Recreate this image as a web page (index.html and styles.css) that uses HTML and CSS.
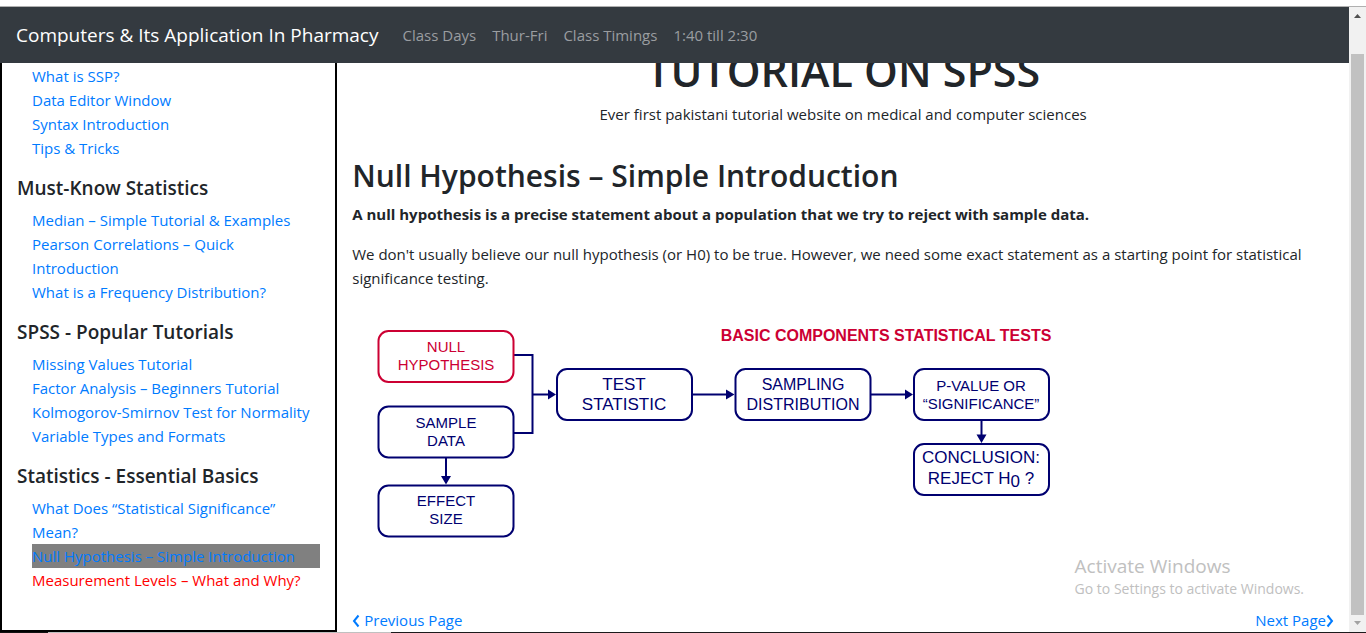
FILE: index.html
```
<!DOCTYPE html>
<html lang="en">
<head>
<meta charset="utf-8">
<title>Tutorial on SPSS</title>
<link rel="stylesheet" href="styles.css">
</head>
<body>
<div class="window">
  <div class="page">
    <nav class="navbar">
      <a class="brand" href="#">Computers &amp; Its Application In Pharmacy</a>
      <a class="nav-link" href="#">Class Days</a>
      <a class="nav-link" href="#">Thur-Fri</a>
      <a class="nav-link" href="#">Class Timings</a>
      <a class="nav-link" href="#">1:40 till 2:30</a>
    </nav>
    <div class="columns">
      <aside class="sidebar">
        <ul class="topics">
          <li><a href="#">What is SSP?</a></li>
          <li><a href="#">Data Editor Window</a></li>
          <li><a href="#">Syntax Introduction</a></li>
          <li><a href="#">Tips &amp; Tricks</a></li>
        </ul>
        <h5>Must-Know Statistics</h5>
        <ul class="topics">
          <li><a href="#">Median – Simple Tutorial &amp; Examples</a></li>
          <li><a href="#">Pearson Correlations – Quick Introduction</a></li>
          <li><a href="#">What is a Frequency Distribution?</a></li>
        </ul>
        <h5>SPSS - Popular Tutorials</h5>
        <ul class="topics">
          <li><a href="#">Missing Values Tutorial</a></li>
          <li><a href="#">Factor Analysis – Beginners Tutorial</a></li>
          <li><a href="#">Kolmogorov-Smirnov Test for Normality</a></li>
          <li><a href="#">Variable Types and Formats</a></li>
        </ul>
        <h5>Statistics - Essential Basics</h5>
        <ul class="topics">
          <li><a href="#">What Does “Statistical Significance” Mean?</a></li>
          <li class="current"><a href="#">Null Hypothesis – Simple Introduction</a></li>
          <li><a class="hot" href="#">Measurement Levels – What and Why?</a></li>
        </ul>
      </aside>
      <main class="content">
        <header class="masthead">
          <h1>TUTORIAL ON SPSS</h1>
          <p>Ever first pakistani tutorial website on medical and computer sciences</p>
        </header>
        <h2>Null Hypothesis – Simple Introduction</h2>
        <p class="lead"><b>A null hypothesis is a precise statement about a population that we try to reject with sample data.</b></p>
        <p>We don't usually believe our null hypothesis (or H0) to be true. However, we need some exact statement as a starting point for statistical significance testing.</p>
        <svg class="diagram" viewBox="352 307 720 264" role="img" aria-label="Basic components of statistical tests">
          <g class="lines">
            <path d="M514 355H532.500V433H514M532.500 394.500H550M692 394.500H728M870 394.500H906M446 458V478M981.500 420V436"/>
            <rect class="red" x="378.500" y="331" width="135" height="51" rx="10"/>
            <rect x="378.500" y="406.500" width="135" height="51" rx="10"/>
            <rect x="378.500" y="485.500" width="135" height="51" rx="10"/>
            <rect x="557" y="369" width="135" height="51" rx="10"/>
            <rect x="735.500" y="369" width="135" height="51" rx="10"/>
            <rect x="914" y="369" width="135" height="51" rx="10"/>
            <rect x="914" y="444" width="135" height="51" rx="10"/>
          </g>
          <path class="heads" d="M548 389.500L556 394.500L548 399.500ZM726 389.500L734.500 394.500L726 399.500ZM905 389.500L913 394.500L905 399.500ZM441 476H451L446 484.500ZM976.500 434.500H986.500L981.500 443Z"/>
          <g class="labels">
            <text class="title" x="886" y="341">BASIC COMPONENTS STATISTICAL TESTS</text>
            <text class="warn" x="446" y="352">NULL</text>
            <text class="warn" x="446" y="370">HYPOTHESIS</text>
            <text x="446" y="428">SAMPLE</text>
            <text x="446" y="446">DATA</text>
            <text x="446" y="506">EFFECT</text>
            <text x="446" y="524">SIZE</text>
            <text class="big" x="624" y="390">TEST</text>
            <text class="big" x="624" y="410">STATISTIC</text>
            <text class="mid" x="803" y="390">SAMPLING</text>
            <text class="mid" x="803" y="410">DISTRIBUTION</text>
            <text x="981" y="391">P-VALUE OR</text>
            <text x="981" y="409">“SIGNIFICANCE”</text>
            <text class="big" x="981" y="463">CONCLUSION:</text>
            <text class="big" x="981" y="484">REJECT H<tspan dy="3">0</tspan><tspan dy="-3"> ?</tspan></text>
          </g>
        </svg>
        <div class="pager">
          <a href="#"><svg class="chev" viewBox="0 0 8 14"><path d="M6.500 1.500L2 7L6.500 12.500"/></svg>Previous Page</a>
          <a href="#">Next Page<svg class="chev" viewBox="0 0 8 14"><path d="M1.500 1.500L6 7L1.500 12.500"/></svg></a>
        </div>
      </main>
    </div>
  </div>
  <div class="scrollbar">
    <svg viewBox="0 0 17 17"><path fill="#505050" d="M5 11L8.500 7L12 11Z"/></svg>
    <div class="thumb"></div>
    <svg viewBox="0 0 17 17"><path fill="#a3a3a3" d="M5 6L8.500 10L12 6Z"/></svg>
  </div>
</div>
<div class="taskbar"></div>
<div class="watermark"><div class="watermark-title">Activate Windows</div><div>Go to Settings to activate Windows.</div></div>
</body>
</html>
```
FILE: styles.css
```
* { box-sizing: border-box; }
body {
  margin: 0;
  padding-top: 6px;
  min-height: 100vh;
  display: flex;
  flex-direction: column;
  overflow: hidden;
  background: #fff;
  color: #212529;
  font: 15px/24px "Open Sans", "Noto Sans", sans-serif;
}
a { color: #007bff; text-decoration: none; }
h1, h2, h5, p, ul { margin: 0; padding: 0; }
h1, h2, h5 { font-weight: 600; }
.window { flex: 1; display: flex; border-top: 1px solid #b0b0b0; }
.page { flex: 1; display: flex; flex-direction: column; }
.navbar {
  position: relative;
  z-index: 1;
  display: flex;
  align-items: center;
  gap: 16px;
  height: 56px;
  padding: 0 16px;
  background: #343a40;
}
.brand { margin-right: 8px; color: #fff; font-size: 19px; }
.nav-link { color: #9a9da0; }
.columns { flex: 1; display: flex; }
.sidebar {
  flex: 0 0 25%;
  padding: 1px 15px 0;
  border: solid #000;
  border-width: 0 2px 2px;
}
.sidebar h5 { margin: 16px 0 8px; font-size: 19px; line-height: 24px; }
.topics { padding-left: 15px; list-style: none; }
.current { background: #808080; }
.topics .hot { color: #f00; }
.content {
  flex: 1;
  display: flex;
  flex-direction: column;
  padding: 0 15px;
}
.masthead { margin: -20px 0 32px; text-align: center; }
.masthead h1 { margin-bottom: 3px; font-size: 43px; line-height: 56px; }
.content h2 { margin-bottom: 8px; font-size: 30px; line-height: 36px; }
.lead { margin-bottom: 16px; }
.diagram { width: 100%; max-width: 720px; margin-top: 17px; }
.lines { fill: none; stroke: #000070; stroke-width: 2; }
.lines .red { stroke: #cc0033; }
.heads { fill: #000070; }
.labels {
  fill: #000070;
  font: 15px "Liberation Sans", Arial, sans-serif;
  text-anchor: middle;
}
.labels .warn { fill: #cc0033; }
.labels .title { fill: #cc0033; font-size: 16px; font-weight: 700; }
.labels .big { font-size: 17px; }
.labels .mid { font-size: 16px; }
.pager { display: flex; justify-content: space-between; margin-top: auto; }
.chev {
  width: 8px;
  height: 14px;
  vertical-align: -2px;
  fill: none;
  stroke: #007bff;
  stroke-width: 2;
}
.pager a:first-child .chev { margin-right: 4px; }
.scrollbar {
  flex: 0 0 17px;
  display: flex;
  flex-direction: column;
  background: #f1f1f1;
}
.scrollbar svg { width: 17px; height: 17px; }
.thumb { flex: 1; margin: 30px 2px 0; background: #c1c1c1; }
.taskbar {
  height: 1px;
  background: linear-gradient(90deg, #111 48px, #c0c0c0 48px 391px, #1c1a1c 391px);
}
.watermark {
  position: absolute;
  right: 62px;
  bottom: 33px;
  color: #c0c0c0;
  font-size: 14px;
  line-height: 22px;
}
.watermark-title { font-size: 19px; line-height: 24px; }
```
